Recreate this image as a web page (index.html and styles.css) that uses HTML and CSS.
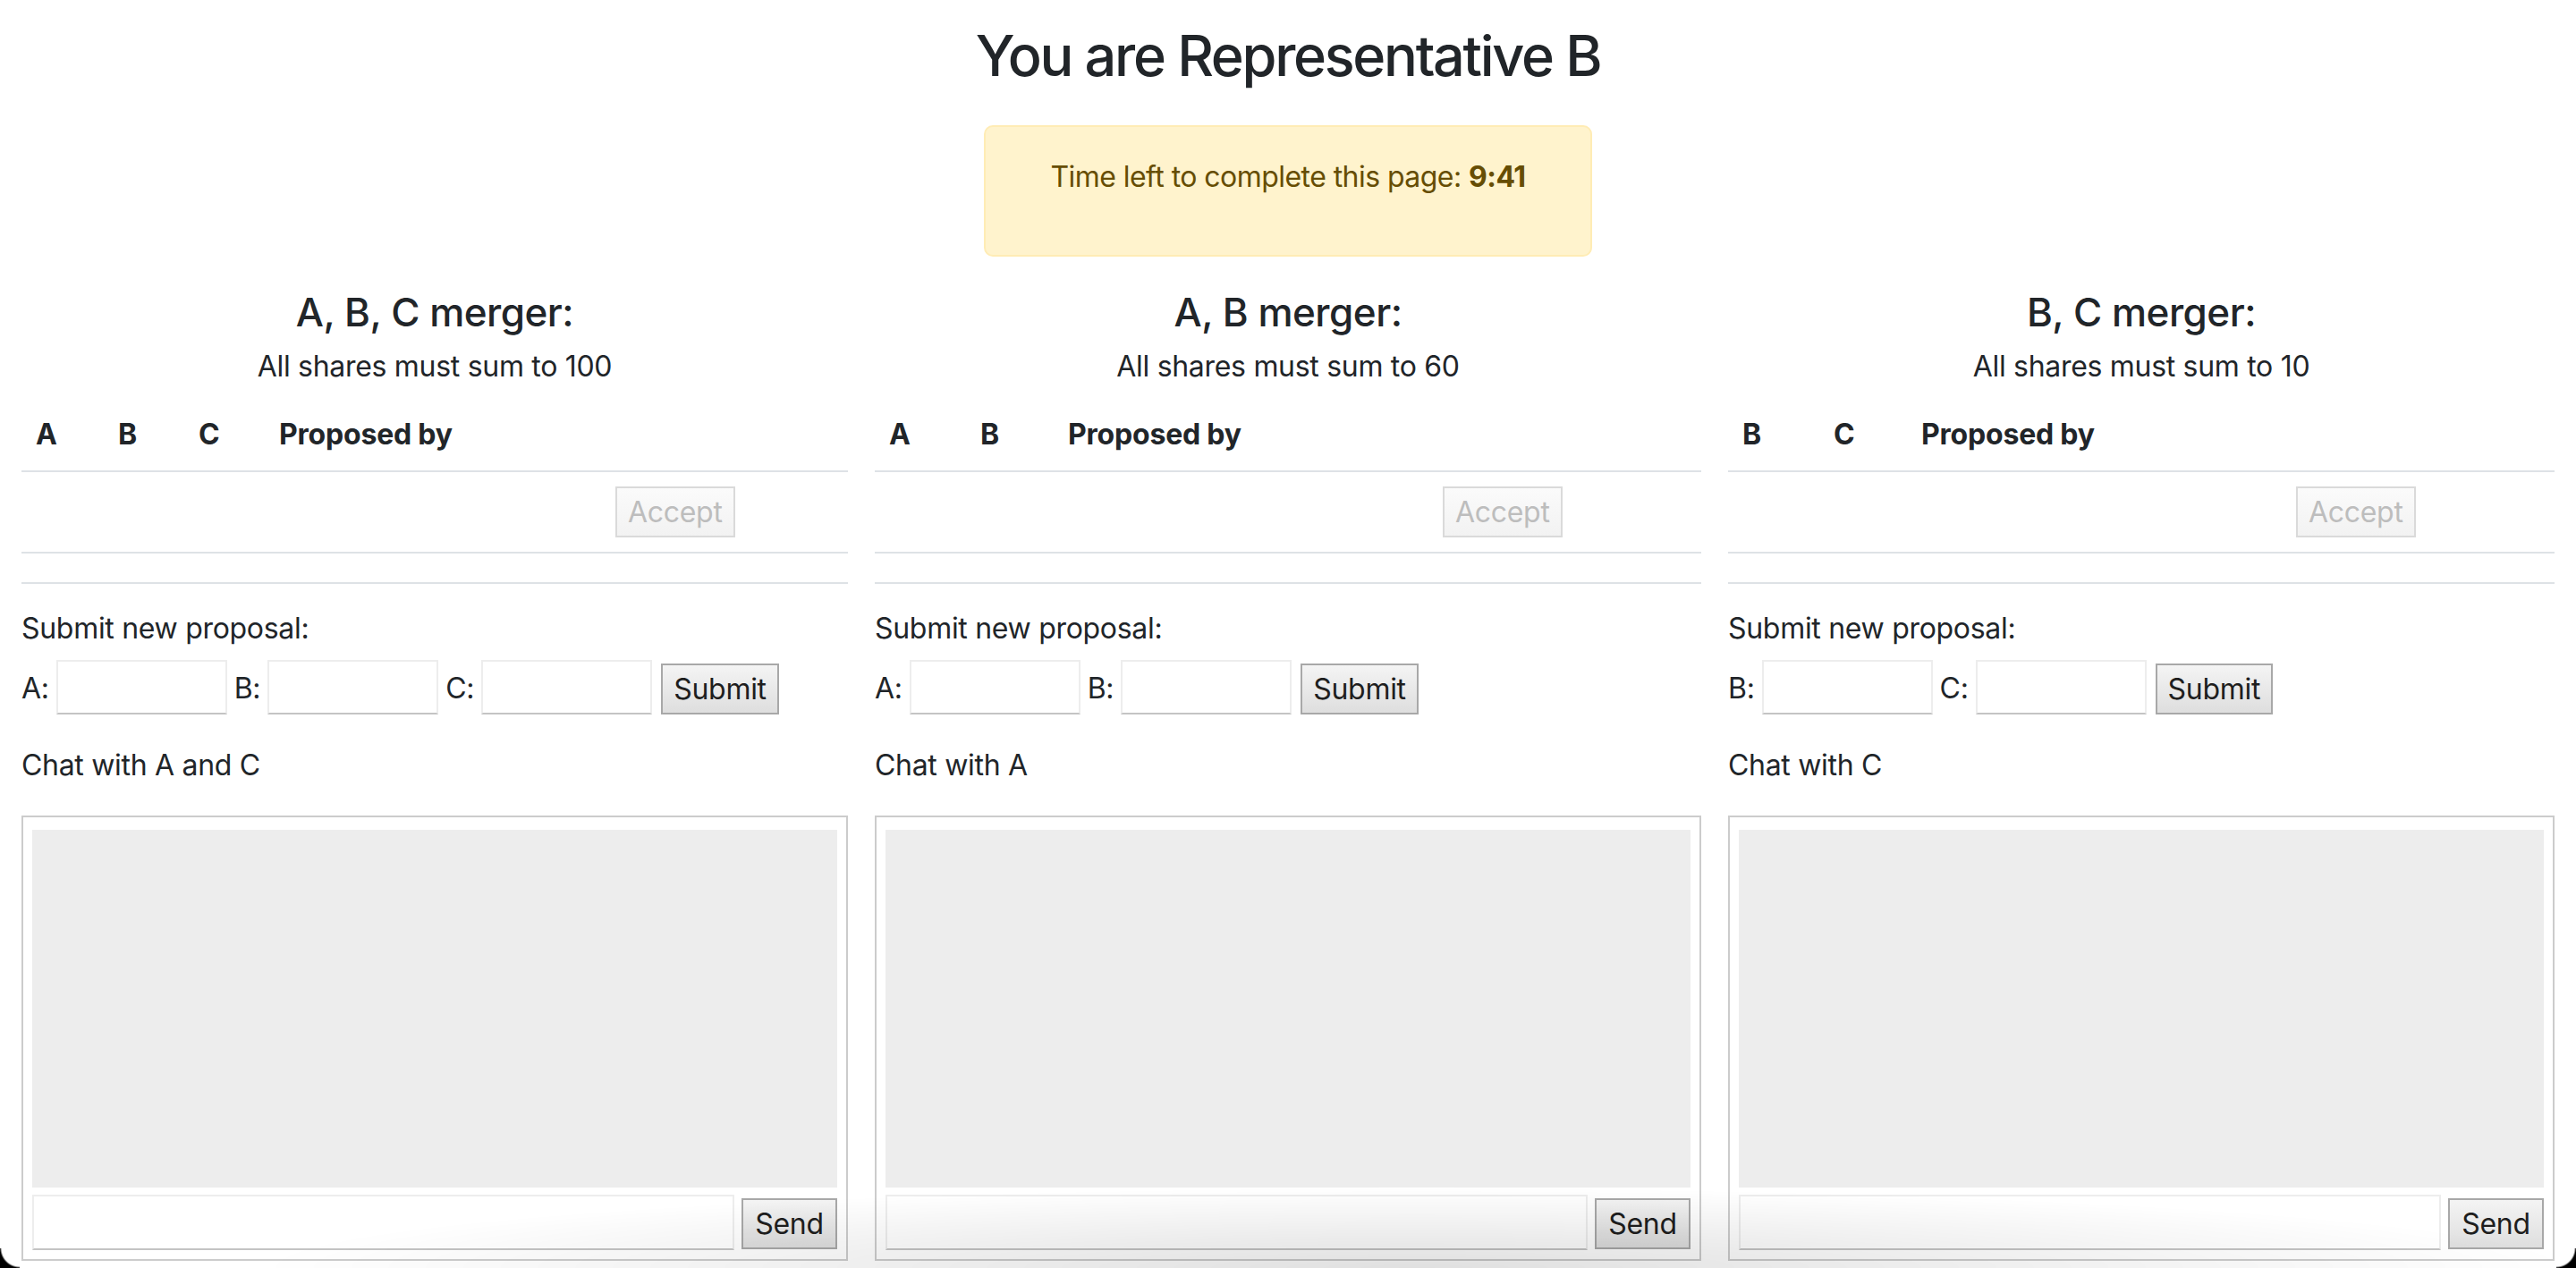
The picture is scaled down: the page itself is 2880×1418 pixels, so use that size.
FILE: index.html
```html
<!DOCTYPE html>
<html lang="en">
<head>
<meta charset="utf-8">
<title>Merger negotiation</title>
<link rel="stylesheet" href="styles.css">
</head>
<body>
<div class="page">
  <h2 class="title">You are Representative B</h2>
  <div class="alert"><p>Time left to complete this page: <b>9:41</b></p></div>

  <div class="columns">
    <section class="merger">
      <h4 class="merger-title">A, B, C merger:</h4>
      <p class="sum">All shares must sum to 100</p>
      <table class="proposals">
        <colgroup><col class="w92"><col class="w90"><col class="w90"><col class="w376"><col></colgroup>
        <thead><tr><th>A</th><th>B</th><th>C</th><th>Proposed by</th><th></th></tr></thead>
        <tbody>
          <tr><td></td><td></td><td></td><td></td><td><button class="btn" disabled>Accept</button></td></tr>
          <tr class="empty"><td></td><td></td><td></td><td></td><td></td></tr>
        </tbody>
      </table>
      <p class="label">Submit new proposal:</p>
      <div class="form-row">
        <label>A:</label><input class="share" type="text">
        <label>B:</label><input class="share" type="text">
        <label>C:</label><input class="share" type="text">
        <button class="btn">Submit</button>
      </div>
      <p class="label chat-label">Chat with A and C</p>
      <div class="chat">
        <div class="chat-log"></div>
        <div class="chat-input"><input type="text"><button class="btn">Send</button></div>
      </div>
    </section>

    <section class="merger">
      <h4 class="merger-title">A, B merger:</h4>
      <p class="sum">All shares must sum to 60</p>
      <table class="proposals">
        <colgroup><col class="w102"><col class="w98"><col class="w419"><col></colgroup>
        <thead><tr><th>A</th><th>B</th><th>Proposed by</th><th></th></tr></thead>
        <tbody>
          <tr><td></td><td></td><td></td><td><button class="btn" disabled>Accept</button></td></tr>
          <tr class="empty"><td></td><td></td><td></td><td></td></tr>
        </tbody>
      </table>
      <p class="label">Submit new proposal:</p>
      <div class="form-row">
        <label>A:</label><input class="share" type="text">
        <label>B:</label><input class="share" type="text">
        <button class="btn">Submit</button>
      </div>
      <p class="label chat-label">Chat with A</p>
      <div class="chat">
        <div class="chat-log"></div>
        <div class="chat-input"><input type="text"><button class="btn">Send</button></div>
      </div>
    </section>

    <section class="merger">
      <h4 class="merger-title">B, C merger:</h4>
      <p class="sum">All shares must sum to 10</p>
      <table class="proposals">
        <colgroup><col class="w102"><col class="w98"><col class="w419"><col></colgroup>
        <thead><tr><th>B</th><th>C</th><th>Proposed by</th><th></th></tr></thead>
        <tbody>
          <tr><td></td><td></td><td></td><td><button class="btn" disabled>Accept</button></td></tr>
          <tr class="empty"><td></td><td></td><td></td><td></td></tr>
        </tbody>
      </table>
      <p class="label">Submit new proposal:</p>
      <div class="form-row">
        <label>B:</label><input class="share" type="text">
        <label>C:</label><input class="share" type="text">
        <button class="btn">Submit</button>
      </div>
      <p class="label chat-label">Chat with C</p>
      <div class="chat">
        <div class="chat-log"></div>
        <div class="chat-input"><input type="text"><button class="btn">Send</button></div>
      </div>
    </section>
  </div>
</div>
<div class="window-shade"></div>
<div class="corner corner-left"></div>
<div class="corner corner-right"></div>
</body>
</html>
```

FILE: styles.css
```css
* { box-sizing: border-box; }

html, body {
  margin: 0;
  background: #ffffff;
}

body {
  font-family: Inter, "Noto Sans", "Liberation Sans", sans-serif;
  font-size: 32px;
  line-height: 48px;
  letter-spacing: -0.3px;
  color: #212529;
}

.page {
  padding: 24px 24px 0;
}

.title {
  margin: 0 0 39px;
  font-size: 63px;
  line-height: 77px;
  font-weight: 500;
  text-align: center;
  letter-spacing: -2.3px;
}

.alert {
  width: 680px;
  margin: 0 auto;
  padding: 32px;
  background: #fff3cd;
  border: 2px solid #ffecb5;
  border-radius: 10px;
  color: #664d03;
  text-align: center;
  letter-spacing: -0.55px;
}

.alert p {
  margin: 0 0 31px;
}

.alert b {
  font-weight: 700;
}

.columns {
  display: grid;
  grid-template-columns: repeat(3, 1fr);
  column-gap: 30px;
  margin-top: 36px;
}

.merger-title {
  margin: 0;
  font-size: 44px;
  line-height: 52px;
  font-weight: 500;
  text-align: center;
  letter-spacing: -0.5px;
}

.sum {
  margin: 11px 0 12px;
  text-align: center;
}

.proposals {
  width: 100%;
  border-collapse: collapse;
  table-layout: fixed;
}

.w90 { width: 90px; }
.w92 { width: 92px; }
.w98 { width: 98px; }
.w102 { width: 102px; }
.w376 { width: 376px; }
.w419 { width: 419px; }

.proposals th,
.proposals td {
  padding: 16px;
  text-align: left;
  vertical-align: middle;
  border-bottom: 2px solid #dee2e6;
}

.proposals th {
  font-weight: 700;
  letter-spacing: -0.2px;
}

.proposals td {
  height: 91px;
}

.proposals .empty td {
  height: 34px;
}

.btn {
  font-family: inherit;
  font-size: 32px;
  line-height: 48px;
  letter-spacing: -0.3px;
  height: 57px;
  padding: 2px 12px;
  margin: 0;
  color: #1e1e1e;
  background: linear-gradient(#f4f4f4, #dedede);
  border: 2px solid #a8a8a8;
  border-radius: 0;
}

.btn:disabled {
  color: #bdbdbd;
  background: linear-gradient(#fbfbfb, #f2f2f2);
  border-color: #dadada;
}

.label {
  margin: 26px 0 0;
}

.form-row {
  display: flex;
  align-items: flex-end;
  gap: 8px;
  margin-top: 11px;
}

.form-row label {
  line-height: 48px;
  padding-bottom: 5px;
}

.share {
  width: 191px;
  height: 61px;
  margin: 0;
  padding: 2px 4px;
  font-family: inherit;
  font-size: 32px;
  border: 2px solid #ededed;
  border-bottom-color: #c4c4c4;
  background: #fff;
}

.form-row .btn {
  margin-left: 2px;
}

.chat-label {
  margin-top: 33px;
}

.chat {
  margin-top: 32px;
  padding: 14px 10px 10px;
  border: 2px solid #cccccc;
}

.chat-log {
  height: 400px;
  background: #ededed;
}

.chat-input {
  display: flex;
  align-items: flex-end;
  gap: 8px;
  margin-top: 8px;
}

.chat-input input {
  flex: 1;
  height: 62px;
  margin: 0;
  padding: 2px 4px;
  font-family: inherit;
  font-size: 32px;
  border: 2px solid #ededed;
  border-bottom-color: #c4c4c4;
  background: #fff;
}

.chat-input .btn {
  width: 107px;
  margin-bottom: 1px;
}

/* macOS window bottom shading and rounded corners (screenshot chrome) */
.window-shade {
  position: fixed;
  left: 0;
  right: 0;
  bottom: 0;
  height: 90px;
  pointer-events: none;
  background: radial-gradient(ellipse 45% 100% at 55% 100%, rgba(0, 0, 0, 0.12), rgba(0, 0, 0, 0) 100%);
}

.corner {
  position: fixed;
  bottom: 0;
  width: 22px;
  height: 22px;
  pointer-events: none;
}

.corner-left {
  left: 0;
  background: radial-gradient(circle at 100% 0, rgba(0, 0, 0, 0) 20px, #000 22px);
}

.corner-right {
  right: 0;
  background: radial-gradient(circle at 0 0, rgba(0, 0, 0, 0) 20px, #000 22px);
}
```
